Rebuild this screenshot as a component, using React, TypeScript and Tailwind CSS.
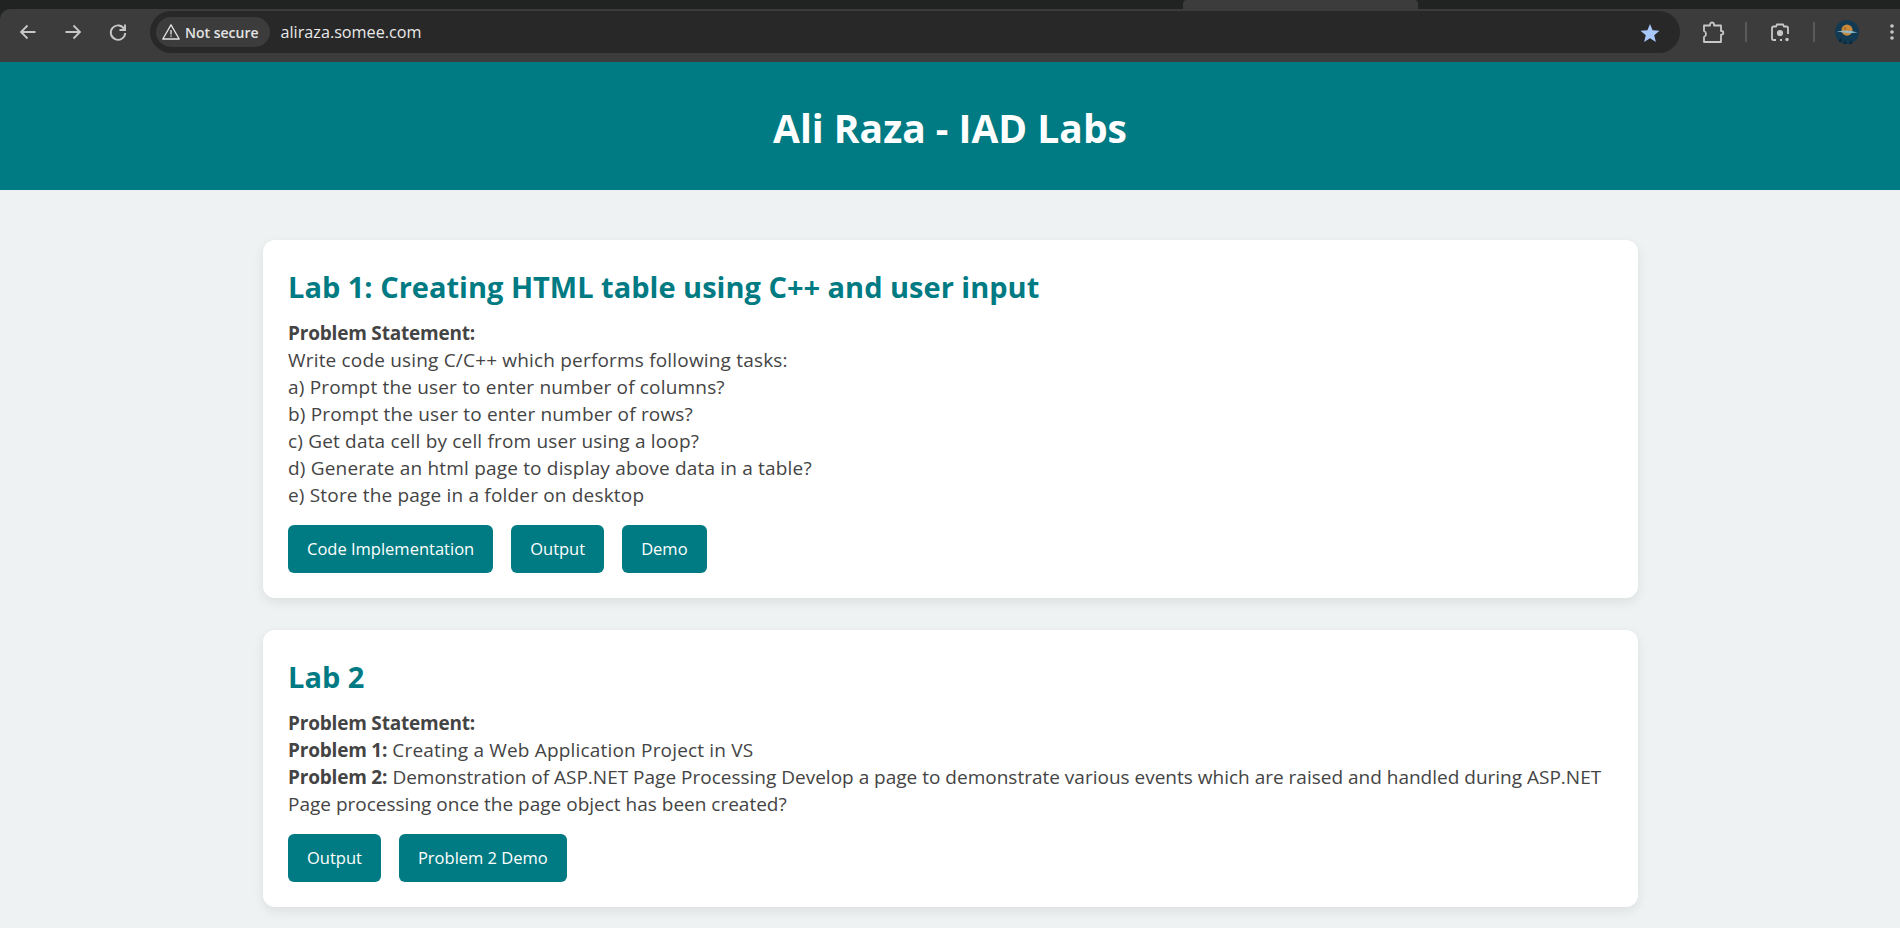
function Toolbar() {
  return (
    <div className="bg-[#212322] h-[62px] flex flex-col">
      {/* tab strip */}
      <div className="h-[9px] flex">
        <div className="w-[1183px]"></div>
        <div className="w-[235px] bg-[#3c3c3c] rounded-t-[4px]"></div>
      </div>
      <div className="flex-1 bg-[#3c3c3c] rounded-tl-[10px] flex items-start pt-[2px] pl-[16px]">
        <div className="h-[42px] flex items-center">
          <svg width="24" height="24" viewBox="0 0 24 24" fill="none" stroke="#c7c7c7" strokeWidth="1.8" className="mr-[21px]">
            <path d="M19.5 12H5M11.5 5.5 5 12l6.5 6.5" />
          </svg>
          <svg width="24" height="24" viewBox="0 0 24 24" fill="none" stroke="#c7c7c7" strokeWidth="1.8" className="mr-[21px]">
            <path d="M4.5 12H19M12.5 5.5 19 12l-6.5 6.5" />
          </svg>
          <svg width="24" height="24" viewBox="0 0 24 24" fill="none" stroke="#c7c7c7" strokeWidth="1.9" className="mr-[20px]">
            <path d="M18.5 9.5A7.2 7.2 0 1 0 19.2 13" />
            <path d="M19 4.5V10h-5.5" />
          </svg>
        </div>
        <div className="w-[1530px] h-[42px] rounded-full bg-[#282828] flex items-center pl-[6px]">
          <div className="h-[30px] rounded-full bg-[#3c3c3c] flex items-center pl-[6px] pr-[11px] gap-[5px]">
            <svg width="18" height="18" viewBox="0 0 18 18" fill="none" stroke="#e3e3e3" strokeWidth="1.3">
              <path d="M9 1.8 17.2 16H.8Z" strokeLinejoin="round" />
              <path d="M9 7v4.5M9 12.6v1.2" />
            </svg>
            <span className="font-['Open_Sans',sans-serif] font-semibold text-[14px] text-[#e3e3e3]">Not secure</span>
          </div>
          <span className="font-['Open_Sans',sans-serif] text-[16.2px] text-[#e8e8e8] ml-[11px]">aliraza.somee.com</span>
          <svg width="20" height="20" viewBox="0 0 20 20" fill="#a8c7fa" className="ml-auto mr-[20px] mt-[1px]">
            <polygon points="10,1 12.6,7.2 19.5,7.7 14.2,12.2 15.9,19 10,15.3 4.1,19 5.8,12.2 0.5,7.7 7.4,7.2" />
          </svg>
        </div>
        <div className="h-[42px] flex items-center ml-[21px]">
          <svg width="24" height="24" viewBox="0 0 24 24" fill="none" stroke="#c7c7c7" strokeWidth="1.8" strokeLinejoin="round">
            <path d="M3 5.5h6V4.5a2 2 0 0 1 4 0v1h7v5.5h.5a1.8 1.8 0 0 1 0 3.6H20v7.4H3v-5a3.2 3.2 0 0 0 2-3 3.2 3.2 0 0 0-2-3z" />
          </svg>
          <div className="w-[2px] h-[20px] bg-[#5a5a5a] ml-[20px] mr-[22px]"></div>
          <svg width="22" height="22" viewBox="0 0 22 22" fill="none" stroke="#c7c7c7" strokeWidth="1.8">
            <path d="M7 19H4.5A1.5 1.5 0 0 1 3 17.5V7A1.5 1.5 0 0 1 4.5 5.5H7L8 3.5h6l1 2h2.5A1.5 1.5 0 0 1 19 7v6M13 19H11" />
            <circle cx="11" cy="12" r="2.2" fill="#c7c7c7" />
            <circle cx="18" cy="18.5" r="1.7" fill="#c7c7c7" stroke="none" />
          </svg>
          <div className="w-[2px] h-[20px] bg-[#5a5a5a] ml-[22px] mr-[20px]"></div>
          <svg width="24" height="24" viewBox="0 0 25 25">
            <circle cx="12.5" cy="12.5" r="12.5" fill="#123a52" />
            <path d="M4 23l1.5-5 1.5 5zM9 25l1.5-4 1.5 4zM15 25l1.5-5 1.5 5z" fill="#0c2436" />
            <circle cx="12.5" cy="10.5" r="5.8" fill="#c98a3e" />
            <circle cx="10.5" cy="9" r="1.4" fill="#a86e2c" />
            <circle cx="14.5" cy="12" r="1.2" fill="#a86e2c" />
            <path d="M1.5 12 9 11.2h7l7.5 1.8-9 .8z" fill="#8fbccd" />
          </svg>
          <svg width="6" height="20" viewBox="0 0 6 20" className="ml-[30px]" fill="#c7c7c7">
            <circle cx="3" cy="4" r="1.8" />
            <circle cx="3" cy="10" r="1.8" />
            <circle cx="3" cy="16" r="1.8" />
          </svg>
        </div>
      </div>
    </div>
  );
}

function Btn({ label }: { label: string }) {
  return (
    <a className="bg-[#007b83] text-white text-[16.5px] rounded-[6px] h-[48px] px-[19px] flex items-center">
      {label}
    </a>
  );
}

export default function App() {
  return (
    <div className="font-['Open_Sans','Noto_Sans',sans-serif] h-[928px] overflow-hidden bg-[#eef2f3] text-[#444444]">
      <Toolbar />
      <header className="bg-[#007b83] h-[128px] flex items-center justify-center pt-[4px]">
        <h1 className="text-white text-[39px] font-bold">Ali Raza - IAD Labs</h1>
      </header>
      <main className="w-[1375px] ml-[263px] pt-[50px] flex flex-col gap-[32px]">
        <section className="bg-white rounded-[12px] shadow-[0_4px_12px_rgba(0,0,0,0.08)] p-[25px]">
          <h2 className="text-[#007b83] text-[29px] font-bold leading-[44px] mb-[11px]">
            Lab 1: Creating HTML table using C++ and user input
          </h2>
          <div className="text-[19px] leading-[27px] tracking-[0.18px]">
            <strong className="tracking-[-0.2px]">Problem Statement:</strong>
            <br />
            Write code using C/C++ which performs following tasks:
            <br />
            a) Prompt the user to enter number of columns?
            <br />
            b) Prompt the user to enter number of rows?
            <br />
            c) Get data cell by cell from user using a loop?
            <br />
            d) Generate an html page to display above data in a table?
            <br />
            e) Store the page in a folder on desktop
          </div>
          <div className="flex gap-[18px] mt-[16px]">
            <Btn label="Code Implementation" />
            <Btn label="Output" />
            <Btn label="Demo" />
          </div>
        </section>
        <section className="bg-white rounded-[12px] shadow-[0_4px_12px_rgba(0,0,0,0.08)] p-[25px]">
          <h2 className="text-[#007b83] text-[29px] font-bold leading-[44px] mb-[11px]">Lab 2</h2>
          <div className="text-[19px] leading-[27px] tracking-[0.18px]">
            <strong className="tracking-[-0.2px]">Problem Statement:</strong>
            <br />
            <strong className="tracking-[-0.2px]">Problem 1:</strong> Creating a Web Application Project in VS
            <br />
            <strong className="tracking-[-0.2px]">Problem 2:</strong>{" "}
            <span className="tracking-normal">
              Demonstration of ASP.NET Page Processing Develop a page to demonstrate various events which are raised and
              handled during ASP.NET Page processing once the page object has been created?
            </span>
          </div>
          <div className="flex gap-[18px] mt-[16px]">
            <Btn label="Output" />
            <Btn label="Problem 2 Demo" />
          </div>
        </section>
      </main>
    </div>
  );
}
